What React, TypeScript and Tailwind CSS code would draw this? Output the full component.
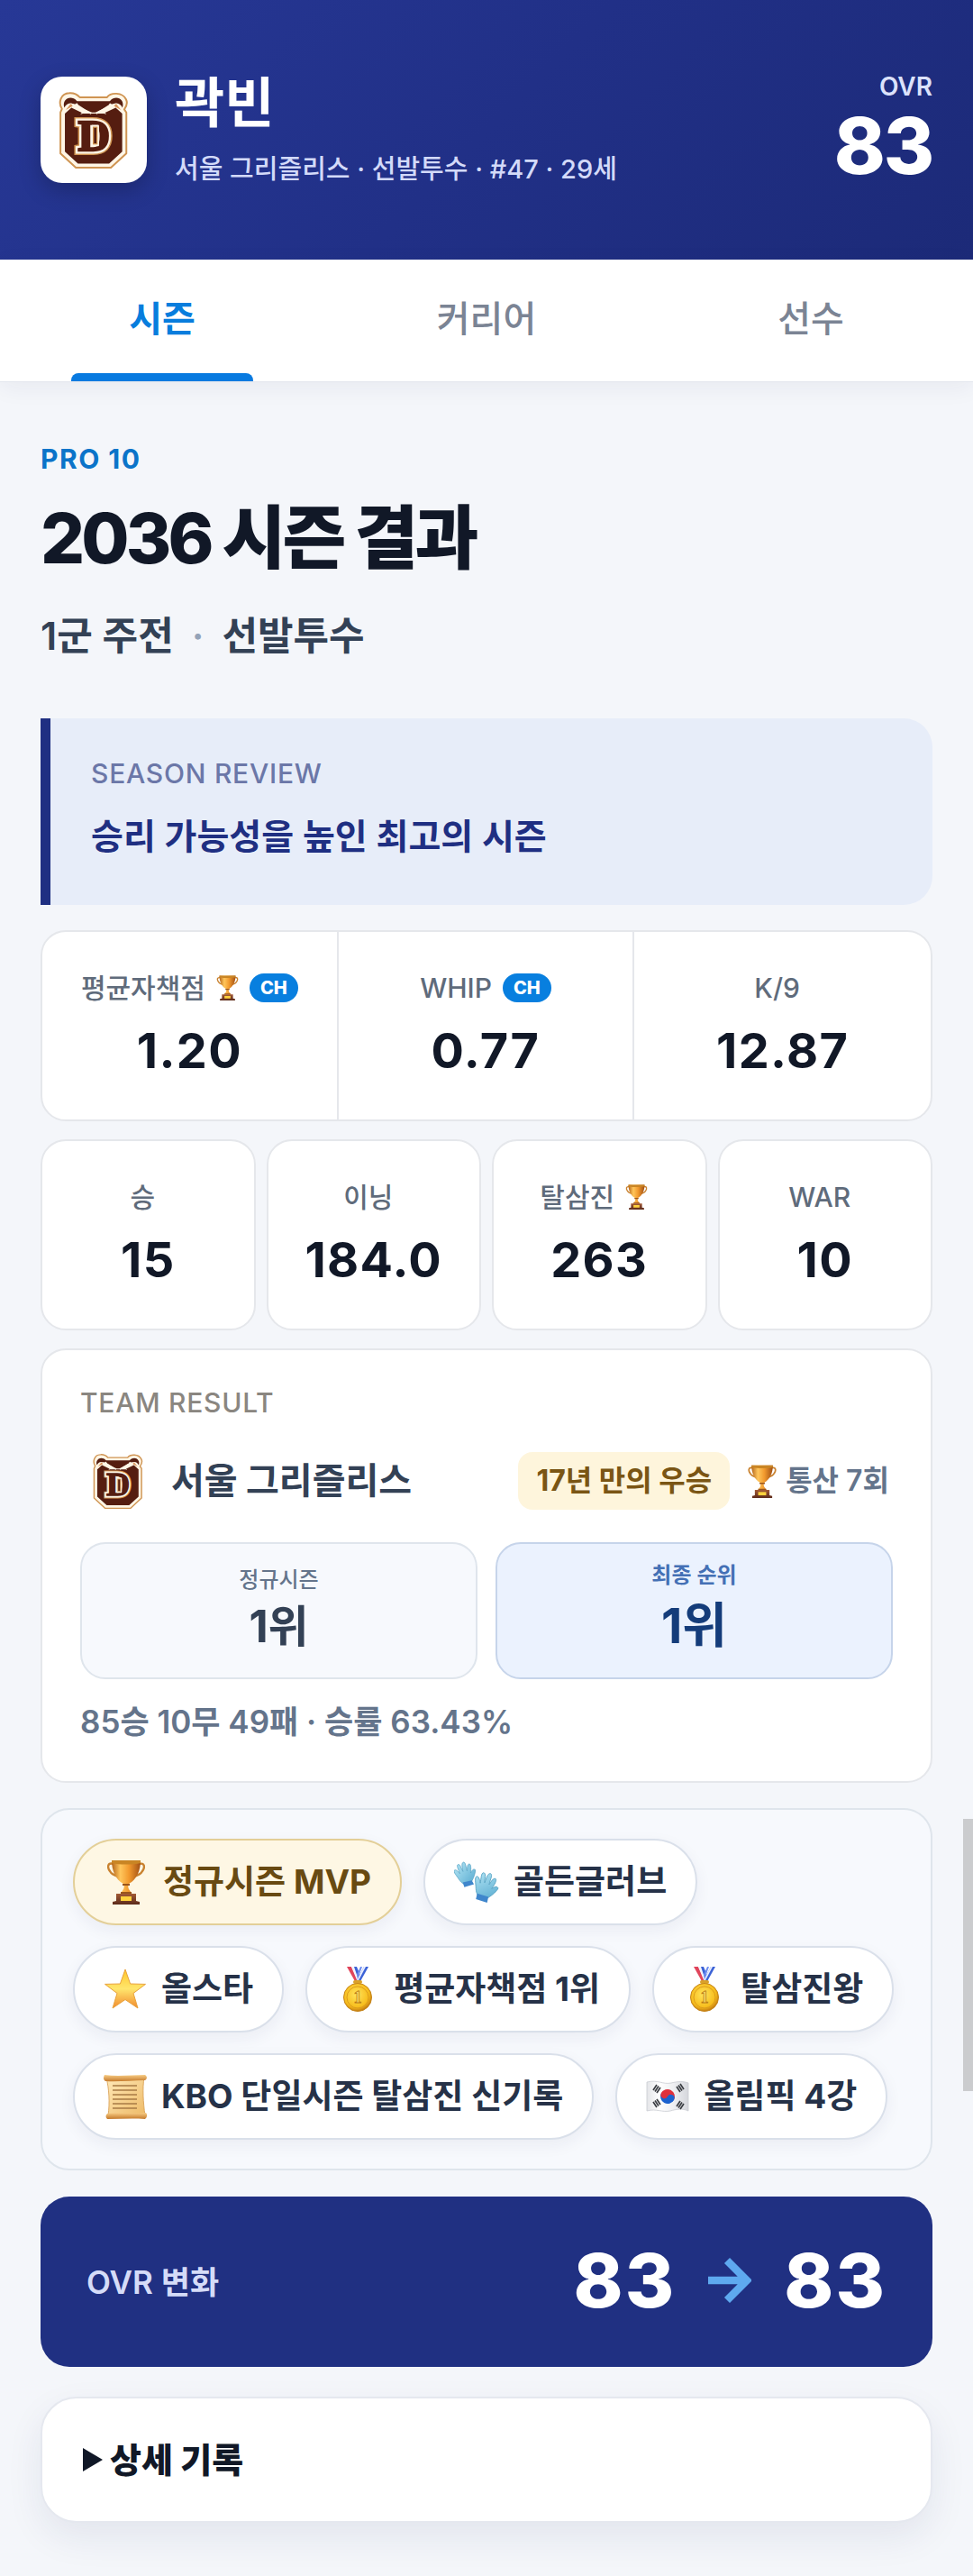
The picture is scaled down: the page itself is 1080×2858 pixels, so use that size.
import React, { useState } from "react";

const FONT = "font-['Inter','Noto_Sans_CJK_KR',sans-serif]";

function BearLogo({ className }: { className: string }) {
  return (
    <svg viewBox="76 58 236 264" className={className} role="img" aria-label="서울 그리즐리스">
      <path
        d="M82 130 L87 118 C74 98 82 66 112 65 C128 64 138 69 147 79 H239 C250 63 290 60 303 86 C309 98 303 112 297 120 L304 130 V268 L252 316 H134 L82 268 Z"
        fill="#fff6e6"
        stroke="#cf9452"
        strokeWidth="6"
        strokeLinejoin="round"
      />
      <path d="M97 134 L119 114 L160 134 H226 L268 114 L290 134 V262 L246 302 H141 L97 262 Z" fill="#551d10" />
      <path d="M132 92 H254 L244 105 L205 130 H181 L143 105 Z" fill="#551d10" />
      <path d="M95 114 C86 84 118 70 137 91 C142 97 132 106 121 100 C110 96 100 104 95 114 Z" fill="#551d10" />
      <path d="M291 114 C300 84 268 70 249 91 C244 97 254 106 265 100 C276 96 286 104 291 114 Z" fill="#551d10" />
      <path d="M100 122 L116 101 L126 107 Z" fill="#d8945a" />
      <path d="M286 122 L270 101 L260 107 Z" fill="#d8945a" />
      <path d="M122 104 L166 124 L160 130 L172 127 L186 133 M264 104 L220 124 L226 130 L214 127 L202 133" fill="none" stroke="#fff6e6" strokeWidth="7" />
      <g fontFamily="Liberation Serif, serif" fontWeight="700" fontSize="150" textAnchor="middle" strokeLinejoin="miter">
        <text x="195" y="257" fill="#cf9452" stroke="#cf9452" strokeWidth="30">D</text>
        <text x="195" y="257" fill="#fff6e6" stroke="#fff6e6" strokeWidth="21">D</text>
        <text x="195" y="257" fill="#551d10" stroke="#551d10" strokeWidth="7">D</text>
      </g>
      <rect x="186" y="172" width="26" height="72" rx="3" fill="#fff6e6" />
      <rect x="191" y="178" width="16" height="60" fill="#cf9452" />
      <rect x="195" y="182" width="8" height="52" fill="#551d10" />
    </svg>
  );
}

function Gradients() {
  return (
    <svg className="absolute size-0" aria-hidden="true">
      <defs>
        <linearGradient id="cup" x1="0" x2="1" y1="0" y2="0">
          <stop offset="0" stopColor="#b5651a" />
          <stop offset=".3" stopColor="#ffc65c" />
          <stop offset=".6" stopColor="#f29a2e" />
          <stop offset="1" stopColor="#a04f14" />
        </linearGradient>
        <linearGradient id="wood" x1="0" x2="0" y1="0" y2="1">
          <stop offset="0" stopColor="#a35a35" />
          <stop offset="1" stopColor="#5b2a1a" />
        </linearGradient>
        <linearGradient id="star" x1="0" x2="0" y1="0" y2="1">
          <stop offset="0" stopColor="#ffc629" />
          <stop offset=".5" stopColor="#ffe66d" />
          <stop offset="1" stopColor="#f28a2e" />
        </linearGradient>
        <radialGradient id="gold" cx=".45" cy=".4" r=".6">
          <stop offset="0" stopColor="#ffe45c" />
          <stop offset=".75" stopColor="#f7bd1c" />
          <stop offset="1" stopColor="#c47a10" />
        </radialGradient>
        <linearGradient id="glove" x1="0" x2="1" y1="0" y2="1">
          <stop offset="0" stopColor="#b5e6f5" />
          <stop offset="1" stopColor="#58abd0" />
        </linearGradient>
        <linearGradient id="paper" x1="0" x2="1" y1="0" y2="1">
          <stop offset="0" stopColor="#ffe9b8" />
          <stop offset="1" stopColor="#eebb68" />
        </linearGradient>
        <linearGradient id="roll" x1="0" x2="0" y1="0" y2="1">
          <stop offset="0" stopColor="#f8cd85" />
          <stop offset="1" stopColor="#c57a2b" />
        </linearGradient>
        <linearGradient id="cloth" x1="0" x2="1" y1="0" y2="0">
          <stop offset="0" stopColor="#e4e5e8" />
          <stop offset=".3" stopColor="#ffffff" />
          <stop offset=".65" stopColor="#eeeff2" />
          <stop offset="1" stopColor="#d5d7dc" />
        </linearGradient>
      </defs>
    </svg>
  );
}

function Trophy({ className }: { className: string }) {
  return (
    <svg viewBox="0 0 42 50" className={className} aria-hidden="true">
      <path d="M7 5 C0 3 0 9 3 13 C5 17 9 18 13 19 M35 5 C42 3 42 9 39 13 C37 17 33 18 29 19" fill="none" stroke="#c9822f" strokeWidth="2.4" />
      <path d="M5 1 H37 C37 12 33 22 24 27 C23 29 23 31 24 33 L28 39 H14 L18 33 C19 31 19 29 18 27 C9 22 5 12 5 1 Z" fill="url(#cup)" />
      <path d="M5 1 H37 V4 C28 6 14 6 5 4 Z" fill="#c98524" />
      <path d="M17 28 H25 M15 37 H27" stroke="#9b551a" strokeWidth="2" />
      <path d="M10 38 H32 V46 L36 47 V50 H6 V47 L10 46 Z" fill="url(#wood)" />
      <rect x="15" y="41" width="12" height="5" fill="#ffd23d" />
    </svg>
  );
}

function Star() {
  return (
    <svg viewBox="0 0 48 48" className="size-12 shrink-0" aria-hidden="true">
      <path d="M24 2 L29.6 18 L46.500 18.400 L33 28.500 L38 45 L24 35.500 L10 45 L15 28.500 L1.500 18.400 L18.400 18 Z" fill="url(#star)" stroke="#e9a23b" strokeWidth="1" strokeLinejoin="round" />
    </svg>
  );
}

function Medal() {
  return (
    <svg viewBox="0 0 48 50" className="h-[50px] w-12 shrink-0" aria-hidden="true">
      <path d="M12 0 H17 L24 15 L22 18 Z" fill="#e0455b" />
      <path d="M17 0 H20 L26 13 L24 17 Z" fill="#f4f6ff" />
      <path d="M20 0 H23 L27 10 L25 15 Z" fill="#3b62d6" />
      <path d="M36 0 H31 L23 15 L26 18 Z" fill="#3b62d6" />
      <path d="M33 0 H31 L23 15 L24 17 Z" fill="#e9eeff" />
      <path d="M29 0 H27 L23 9 L24 14 Z" fill="#6f8ef0" />
      <rect x="19" y="15" width="10" height="4" rx="2" fill="#d9a12a" />
      <circle cx="24" cy="34" r="15.500" fill="url(#gold)" stroke="#c5851b" strokeWidth="1" />
      <circle cx="24" cy="34" r="12" fill="none" stroke="#dc9c1c" strokeWidth="1" />
      <text x="24" y="40" textAnchor="middle" fontFamily="Liberation Serif, serif" fontSize="18" fontWeight="700" fill="#ffe168" stroke="#b97a12" strokeWidth=".8">1</text>
    </svg>
  );
}

function Gloves() {
  const hand =
    "M5 20 C3 15 -1 10 1 8 C3 7 5 10 7 13 C6 8 4 3 6 2 C9 1 9 6 11 11 C11 6 10 1 13 0 C16 0 15 6 16 11 C17 7 17 3 20 3 C22 4 21 9 20 14 C22 11 24 9 26 11 C26 14 23 20 20 24 L10 26 C7 24 6 22 5 20 Z";
  return (
    <svg viewBox="0 0 50 48" className="h-12 w-[50px] shrink-0" aria-hidden="true">
      <g transform="translate(0 2) rotate(-8 12 12) scale(.92)">
        <path d={hand} fill="url(#glove)" stroke="#5ba6c6" strokeWidth=".8" />
        <path d="M9 24 L20 23 L22 28 L10 30 Z" fill="#3f86cc" />
      </g>
      <g transform="translate(22 13) rotate(22 12 12) scale(1.080)">
        <path d={hand} fill="url(#glove)" stroke="#5ba6c6" strokeWidth=".8" />
        <path d="M8 24 L20 23 L21 29 L9 30 Z" fill="#3f86cc" />
      </g>
    </svg>
  );
}

function Scroll() {
  return (
    <svg viewBox="0 0 48 50" className="h-[50px] w-12 shrink-0" aria-hidden="true">
      <path d="M3 4 H45 C43 16 44 32 46 46 H5 C7 32 6 16 3 4 Z" fill="url(#paper)" stroke="#d59b4c" strokeWidth=".8" />
      <path d="M10 13 H37 M10 18 H37 M10 23 H37 M10 28 H37 M10 33 H37 M10 38 H37" stroke="#a87b45" strokeWidth="1.300" />
      <path d="M1 1 C16 3 32 1 46 1 C49 3 48 6 46 7 C32 7 16 9 2 8 C-1 6 0 3 1 1 Z" fill="url(#roll)" />
      <path d="M4 44 C18 42 34 45 47 43 C49 45 48 49 46 50 C32 49 18 50 4 50 C2 48 2 46 4 44 Z" fill="url(#roll)" />
    </svg>
  );
}

function KoreaFlag() {
  return (
    <svg viewBox="0 0 48 36" className="h-9 w-12 shrink-0" aria-hidden="true">
      <path d="M1 2 C14 -1 18 5 28 3 C36 1 42 1 47 3 V34 C40 31 34 32 27 34 C18 36 12 31 1 34 Z" fill="url(#cloth)" stroke="#c9ccd2" strokeWidth=".8" />
      <g transform="rotate(28 24 18)">
        <path d="M16 18 A8 8 0 0 1 32 18 Z" fill="#e0303c" />
        <path d="M16 18 A8 8 0 0 0 32 18 Z" fill="#1c62cf" />
        <circle cx="20" cy="18" r="4" fill="#e0303c" />
        <circle cx="28" cy="18" r="4" fill="#1c62cf" />
      </g>
      <g stroke="#3a3d42" strokeWidth="1.700">
        <path d="M8 11 L12 5 M10 12.500 L14 6.500 M12 14 L16 8" />
        <path d="M34 7 L38 13 M36 5.500 L40 11.500 M38 4 L42 10" />
        <path d="M8 24 L12 30 M10 22.500 L14 28.500 M12 21 L16 27" />
        <path d="M34 29 L38 23 M36 30.500 L40 24.500 M38 32 L42 26" />
      </g>
    </svg>
  );
}

function Stat({ label, value, trophy, ch }: { label: string; value: string; trophy?: boolean; ch?: boolean }) {
  return (
    <div className="flex flex-col items-center pt-11 pb-11">
      <dt className="flex h-9 items-center text-[30px] leading-9 font-medium whitespace-nowrap text-[#5f6b7b]">
        {label}
        {trophy && <Trophy className="mx-3 h-7 w-[25px]" />}
        {ch && (
          <span className={`rounded-full bg-[#087fdf] px-3 text-xl leading-8 font-extrabold text-white ${trophy ? "" : "ml-3"}`}>CH</span>
        )}
        {!trophy && !ch && <span className="w-3" />}
      </dt>
      <dd className="mt-5 text-[54px] leading-16 font-bold tracking-wide text-[#111827]">{value}</dd>
    </div>
  );
}

function Chip({ icon, label, gold }: { icon: React.ReactNode; label: string; gold?: boolean }) {
  return (
    <li
      className={`flex h-24 items-center gap-4 rounded-full border-2 px-8 text-[37px] leading-12 font-bold whitespace-nowrap shadow-[0_6px_18px_rgba(30,41,90,0.06)] ${
        gold ? "border-[#e3cf98] bg-[#fef7e4] text-[#684a12]" : "border-[#dae0ea] bg-white text-[#263248]"
      }`}
    >
      {icon}
      {label}
    </li>
  );
}

export default function App() {
  const [tab, setTab] = useState("시즌");
  return (
    <div className={`relative min-h-screen bg-[#f4f6fa] text-[#111827] ${FONT}`}>
      <Gradients />
      <header className="flex h-72 items-center bg-linear-135 from-[#273896] via-[#213087] to-[#1c2a78] px-[45px]">
        <div className="flex size-[118px] items-center justify-center rounded-3xl bg-white shadow-[0_8px_24px_rgba(0,0,0,0.22)]">
          <BearLogo className="h-[87px] w-[78px]" />
        </div>
        <div className="ml-[31px]">
          <p className="text-[60px] leading-16 font-bold text-white">곽빈</p>
          <p className="mt-6 text-[29px] leading-9 font-medium text-[#d3daf9]">서울 그리즐리스 · 선발투수 · #47 · 29세</p>
        </div>
        <div className="ml-auto text-right">
          <p className="text-[28px] leading-9 font-semibold text-[#dce2fb]">OVR</p>
          <p className="text-[86px] leading-24 font-extrabold tracking-tight text-white">83</p>
        </div>
      </header>

      <nav className="grid grid-cols-3 border-b border-[#e4e7ee] bg-white shadow-[0_6px_24px_rgba(30,41,90,0.06)]">
        {["시즌", "커리어", "선수"].map((t) => (
          <button
            key={t}
            type="button"
            onClick={() => setTab(t)}
            className={`relative h-[135px] pb-1 text-[40px] leading-12 ${tab === t ? "font-bold text-[#087ddd]" : "font-medium text-[#7b8494]"}`}
          >
            {t}
            {tab === t && <span className="absolute inset-x-[22%] bottom-0 h-[9px] rounded-t-lg bg-[#087ae0]" />}
          </button>
        ))}
      </nav>

      <main className="px-[45px] pt-[67px] pb-[59px]">
        <p className="text-[30px] leading-9 font-bold tracking-wider text-[#0b74c9]">PRO 10</p>
        <h1 className="mt-6 text-[77px] leading-[92px] font-extrabold tracking-tighter">2036 시즌 결과</h1>
        <p className="mt-[34px] flex gap-5 text-[43px] leading-14 font-semibold text-[#334155]">
          <span>1군 주전</span>
          <span className="text-[#94a3b8]">·</span>
          <span>선발투수</span>
        </p>

        <section className="mt-16 rounded-r-[32px] border-l-11 border-[#1f2f82] bg-[#e7edf9] px-[45px] pt-[43px] pb-[50px]">
          <h2 className="text-[30px] leading-9 font-medium tracking-wide text-[#6b77a8]">SEASON REVIEW</h2>
          <p className="mt-[26px] text-[39px] leading-13 font-semibold text-[#1f2f82]">승리 가능성을 높인 최고의 시즌</p>
        </section>

        <dl className="mt-7 grid grid-cols-3 divide-x-2 divide-[#e5e7eb] rounded-[28px] border-2 border-[#e5e7eb] bg-white">
          <Stat label="평균자책점" value="1.20" trophy ch />
          <Stat label="WHIP" value="0.77" ch />
          <Stat label="K/9" value="12.87" />
        </dl>

        <div className="mt-5 grid grid-cols-4 gap-3">
          {[
            { label: "승", value: "15" },
            { label: "이닝", value: "184.0" },
            { label: "탈삼진", value: "263", trophy: true },
            { label: "WAR", value: "10" },
          ].map((s) => (
            <dl key={s.label} className="rounded-[28px] border-2 border-[#e5e7eb] bg-white">
              <Stat {...s} />
            </dl>
          ))}
        </div>

        <section className="mt-5 rounded-[28px] border-2 border-[#e5e7eb] bg-white px-[42px] pt-10 pb-11">
          <h2 className="text-[30px] leading-9 font-medium tracking-wide text-[#8a8680]">TEAM RESULT</h2>
          <div className="mt-[37px] flex h-16 items-center">
            <BearLogo className="ml-3.5 h-[63px] w-14" />
            <p className="ml-[31px] text-[40px] leading-12 font-bold text-[#334155]">서울 그리즐리스</p>
            <p className="ml-auto rounded-2xl bg-[#fef5dc] px-5 text-[32px] leading-16 font-bold text-[#7a5514]">17년 만의 우승</p>
            <Trophy className="ml-5 h-[37px] w-8" />
            <p className="ml-2.5 pr-1 text-[32px] leading-10 font-semibold text-[#64748b]">통산 7회</p>
          </div>
          <div className="mt-9 grid grid-cols-2 gap-5 text-center">
            <div className="flex h-[152px] flex-col items-center justify-center rounded-[28px] border-2 border-[#dfe5ec] bg-[#f7f9fd]">
              <p className="text-2xl leading-7 font-medium text-[#64748b]">정규시즌</p>
              <p className="mt-2 text-[49px] leading-15 font-bold text-[#334155]">1위</p>
            </div>
            <div className="flex h-[152px] flex-col items-center justify-center rounded-[28px] border-2 border-[#c6d4ea] bg-[#ebf2fe] pb-1">
              <p className="text-2xl leading-7 font-semibold text-[#4470b5]">최종 순위</p>
              <p className="mt-2.5 text-[54px] leading-16 font-bold text-[#143c7a]">1위</p>
            </div>
          </div>
          <p className="mt-[25px] text-[35px] leading-11 font-semibold text-[#64748b]">85승 10무 49패 · 승률 63.43%</p>
        </section>

        <ul className="mt-7 flex flex-wrap gap-x-6 gap-y-[23px] rounded-[32px] border-2 border-[#dfe5ec] bg-[#f7f9fd] px-[34px] py-8">
          <Chip gold icon={<Trophy className="mx-1 h-[50px] w-[42px] shrink-0" />} label="정규시즌 MVP" />
          <Chip icon={<Gloves />} label="골든글러브" />
          <Chip icon={<Star />} label="올스타" />
          <Chip icon={<Medal />} label="평균자책점 1위" />
          <Chip icon={<Medal />} label="탈삼진왕" />
          <Chip icon={<Scroll />} label="KBO 단일시즌 탈삼진 신기록" />
          <Chip icon={<KoreaFlag />} label="올림픽 4강" />
        </ul>

        <section className="mt-[29px] flex h-[189px] items-center rounded-[32px] bg-[#203082] px-[51px]">
          <h2 className="text-[35px] leading-11 font-semibold text-[#d5dcf8]">OVR 변화</h2>
          <p className="ml-auto flex items-center pb-1 text-[83px] leading-24 font-extrabold tracking-wide text-white">
            83
            <svg viewBox="0 0 48 50" className="mx-9 h-[50px] w-12" aria-label="에서">
              <path d="M0 25 H42 M21 3 L43 25 L21 47" fill="none" stroke="#5ea9ef" strokeWidth="8.500" />
            </svg>
            83
          </p>
        </section>

        <details className="group mt-[33px] rounded-[40px] border-2 border-[#e5e8ef] bg-white shadow-[0_16px_40px_rgba(30,41,90,0.08)]">
          <summary className="flex h-[136px] cursor-pointer list-none items-center gap-2 px-[45px] text-[38px] font-extrabold">
            <svg viewBox="0 0 22 26" className="h-[26px] w-[22px] group-open:rotate-90" aria-hidden="true">
              <path d="M0 0 L22 13 L0 26 Z" fill="#111827" />
            </svg>
            상세 기록
          </summary>
        </details>
      </main>

      <div className="absolute top-[2018px] right-0 h-[302px] w-[11px] bg-[#cbccce]" />
    </div>
  );
}
